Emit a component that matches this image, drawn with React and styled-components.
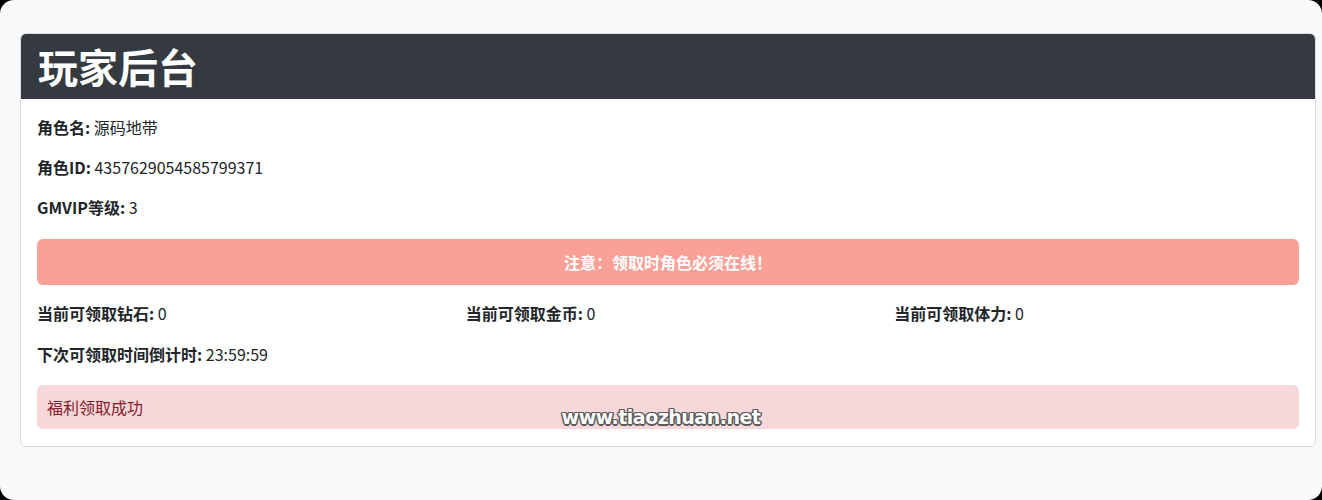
import React from "react";
import styled, { createGlobalStyle } from "styled-components";

const Global = createGlobalStyle`
  html, body { margin: 0; padding: 0; background: #000; }
  body {
    font-family: "Noto Sans CJK SC", "Noto Sans", sans-serif;
    font-size: 16px;
    line-height: 24px;
    color: #212529;
  }
  * { box-sizing: border-box; }
`;

const Page = styled.div`
  position: relative;
  min-height: 500px;
  background: #f8f9fa;
  border-radius: 14px;
  padding: 33px 6px 0 20px;
`;

const Card = styled.div`
  background: #fff;
  border: 1px solid #d9dcdf;
  border-radius: 6px;
  overflow: hidden;
`;

const CardHeader = styled.div`
  background: #343a40;
  color: #fff;
  padding: 8px 17px 9px;
`;

const Title = styled.h1`
  margin: 0;
  font-size: 40px;
  line-height: 48px;
  font-weight: 700;
`;

const CardBody = styled.div`
  padding: 16px 16px 17px;
`;

const Line = styled.p`
  margin: 0 0 ${(p) => p.$mb ?? 16}px;
  line-height: 24px;
`;

const Label = styled.strong`
  font-weight: 700;
`;

const Alert = styled.div`
  border-radius: 6px;
  padding: 10px;
  background: ${(p) => p.$bg};
  color: ${(p) => p.$color};
  text-align: ${(p) => (p.$center ? "center" : "left")};
  font-weight: ${(p) => (p.$bold ? 700 : 400)};
  line-height: ${(p) => p.$lh}px;
  margin: ${(p) => p.$m};
`;

const Grid = styled.div`
  display: grid;
  grid-template-columns: repeat(3, 1fr);
  column-gap: 24px;
  margin-bottom: 17px;
`;

const Watermark = styled.div`
  position: absolute;
  left: 0;
  right: 0;
  top: 403px;
  text-align: center;
  font-family: "DejaVu Sans", sans-serif;
  font-weight: 700;
  font-size: 19px;
  line-height: 28px;
  letter-spacing: -0.5px;
  color: #fff;
  text-shadow:
    -1px -1px 0 #5a5a5a, 1px -1px 0 #5a5a5a, -1px 1px 0 #5a5a5a, 1px 1px 0 #5a5a5a,
    0 -1.5px 0 #5a5a5a, 0 1.5px 0 #5a5a5a, -1.5px 0 0 #5a5a5a, 1.5px 0 0 #5a5a5a;
  pointer-events: none;
`;

export default function App() {
  return (
    <>
      <Global />
      <Page>
        <Card>
          <CardHeader>
            <Title>玩家后台</Title>
          </CardHeader>
          <CardBody>
            <Line><Label>角色名:</Label> 源码地带</Line>
            <Line><Label>角色ID:</Label> 4357629054585799371</Line>
            <Line $mb={0}><Label>GMVIP等级:</Label> 3</Line>
            <Alert $bg="#fba097" $color="#fff" $center $bold $lh={26} $m="20px 0 16px">
              注意：领取时角色必须在线！
            </Alert>
            <Grid>
              <div><Label>当前可领取钻石:</Label> 0</div>
              <div><Label>当前可领取金币:</Label> 0</div>
              <div><Label>当前可领取体力:</Label> 0</div>
            </Grid>
            <Line $mb={0}><Label>下次可领取时间倒计时:</Label> 23:59:59</Line>
            <Alert $bg="#f8d7da" $color="#842029" $lh={24} $m="19px 0 0">
              福利领取成功
            </Alert>
          </CardBody>
        </Card>
        <Watermark>www.tiaozhuan.net</Watermark>
      </Page>
    </>
  );
}
